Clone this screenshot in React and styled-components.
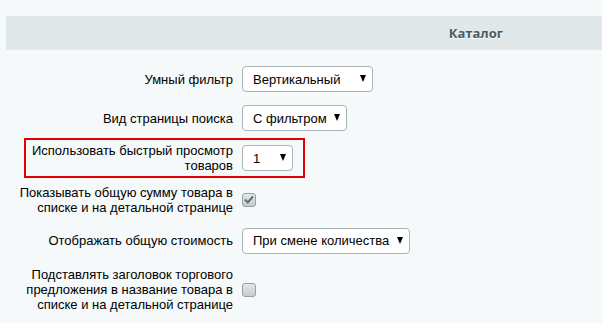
import React from 'react';
import styled, { createGlobalStyle } from 'styled-components';

const GlobalStyle = createGlobalStyle`
  html, body {
    margin: 0;
    padding: 0;
    background: #f5f9f9;
  }
  body {
    font-family: Arial, "Liberation Sans", sans-serif;
    font-size: 13px;
    color: #000;
  }
`;

const Page = styled.div`
  width: 602px;
  height: 323px;
  overflow: hidden;
  padding-top: 16px;
  box-sizing: border-box;
`;

const HeaderBar = styled.div`
  margin-left: 6px;
  height: 34px;
  background: #e0e8ea;
  display: flex;
  align-items: center;
  justify-content: flex-end;
  padding-right: 99px;
  font-family: "Open Sans", Arial, sans-serif;
  font-size: 13px;
  font-weight: 700;
  color: #4b5b63;
  text-shadow: 0 1px 0 #fff;
`;

const Rows = styled.div`
  display: flex;
  flex-direction: column;
  padding-top: 9px;
`;

const Row = styled.div`
  display: grid;
  grid-template-columns: ${({ $highlight }) => ($highlight ? '216px' : '242px')} auto;
  align-items: center;
  padding: ${({ $pad }) => $pad || '6px 0'};
  ${({ $highlight }) =>
    $highlight &&
    `
    margin-left: 24px;
    width: 281px;
    box-sizing: border-box;
    border: 2px solid #e30000;
  `}
`;

const Label = styled.div`
  text-align: right;
  line-height: 15px;
  padding: 0 9px 0 ${({ $left }) => $left ?? 18}px;
`;

const Select = styled.div`
  width: ${({ $width }) => $width}px;
  height: 26px;
  box-sizing: border-box;
  border: 1px solid #aab4b8;
  border-radius: 4px;
  background: #fff;
  display: flex;
  align-items: center;
  justify-content: space-between;
  padding: 0 6px 0 10px;
`;

const Arrow = styled.span`
  width: 0;
  height: 0;
  border-left: 3.5px solid transparent;
  border-right: 3.5px solid transparent;
  border-top: 7px solid #000;
  margin-top: -1px;
`;

const Box = styled.div`
  width: 14px;
  height: 14px;
  box-sizing: border-box;
  border: 1px solid #959fa4;
  border-radius: 3px;
  background: linear-gradient(#e4e8ea, #c4cacd);
  display: flex;
  align-items: center;
  justify-content: center;
`;

const Dropdown = ({ value, width }) => (
  <Select $width={width}>
    <span>{value}</span>
    <Arrow />
  </Select>
);

const Checkbox = ({ checked }) => (
  <Box>
    {checked && (
      <svg width="10" height="9" viewBox="0 0 10 9">
        <path d="M1 4.5 L3.8 7.3 L9 1.5" fill="none" stroke="#5f6a70" strokeWidth="1.9" />
      </svg>
    )}
  </Box>
);

export default function App() {
  return (
    <>
      <GlobalStyle />
      <Page>
        <HeaderBar>Каталог</HeaderBar>
        <Rows>
          <Row $pad="7px 0 6.5px">
            <Label>Умный фильтр</Label>
            <Dropdown value="Вертикальный" width={131} />
          </Row>
          <Row $pad="6.5px 0 7px">
            <Label>Вид страницы поиска</Label>
            <Dropdown value="С фильтром" width={105} />
          </Row>
          <Row $highlight $pad="3px 0">
            <Label $left={0}>Использовать быстрый просмотр товаров</Label>
            <Dropdown value="1" width={51} />
          </Row>
          <Row $pad="6.5px 0">
            <Label>Показывать общую сумму товара в списке и на детальной странице</Label>
            <Checkbox checked />
          </Row>
          <Row $pad="6.5px 0">
            <Label>Отображать общую стоимость</Label>
            <Dropdown value="При смене количества" width={168} />
          </Row>
          <Row $pad="7px 0">
            <Label>Подставлять заголовок торгового предложения в название товара в списке и на детальной странице</Label>
            <Checkbox />
          </Row>
        </Rows>
      </Page>
    </>
  );
}
